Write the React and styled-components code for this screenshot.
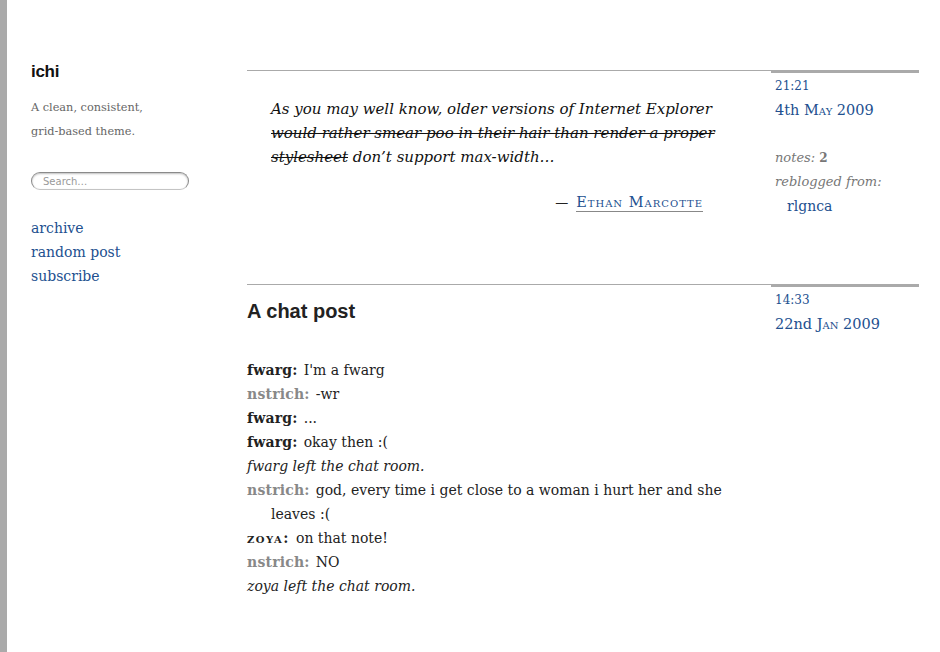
import React from "react";
import styled, { createGlobalStyle } from "styled-components";

const GlobalStyle = createGlobalStyle`
  html, body { margin: 0; padding: 0; background: #fff; }
  body { font-family: "DejaVu Serif", Georgia, serif; color: #222; }
`;

const serif = `"DejaVu Serif", Georgia, serif`;
const sans = `"Liberation Sans", Helvetica, Arial, sans-serif`;
const blue = "#22508f";

const Page = styled.div`
  min-height: 100vh;
  box-sizing: border-box;
  border-left: 7px solid #aaa;
  padding: 60px 0 40px 24px;
  display: flex;
  align-items: flex-start;
`;

const Sidebar = styled.aside`
  width: 158px;
  margin-right: 58px;
  flex-shrink: 0;
`;

const SiteTitle = styled.h1`
  margin: 0;
  font-family: ${sans};
  font-weight: bold;
  font-size: 17px;
  line-height: 24px;
  color: #111;
  letter-spacing: -0.3px;
`;

const Tagline = styled.p`
  margin: 12px 0 0;
  font-family: ${serif};
  font-size: 11.3px;
  line-height: 24px;
  color: #666;
`;

const Search = styled.input`
  display: block;
  box-sizing: border-box;
  margin-top: 28px;
  width: 158px;
  height: 18px;
  border: 1px solid #8a8a8a;
  border-bottom-color: #c4c4c4;
  border-radius: 9px;
  box-shadow: inset 0 1px 2px rgba(0, 0, 0, 0.25);
  padding: 0 11px;
  font-family: "DejaVu Sans", "Liberation Sans", sans-serif;
  font-size: 10px;
  color: #333;
  outline: none;
  &::placeholder { color: #999; }
`;

const NavList = styled.nav`
  margin-top: 26px;
  display: flex;
  flex-direction: column;
`;

const NavLink = styled.a`
  font-family: ${serif};
  font-size: 14px;
  line-height: 24px;
  color: ${blue};
  text-decoration: none;
`;

const Main = styled.main`
  margin-top: 10px;
  display: flex;
  flex-direction: column;
  gap: 66px;
`;

const Post = styled.article`
  display: grid;
  grid-template-columns: 524px 148px;
  align-items: start;
`;

const Content = styled.div`
  border-top: 1px solid #aaa;
  padding-top: ${(p) => p.$top}px;
`;

const Meta = styled.div`
  border-top: 3px solid #aaa;
  padding: 1px 0 0 4px;
  font-family: ${serif};
  line-height: 24px;
`;

const Time = styled.a`
  display: block;
  font-size: 12px;
  color: ${blue};
  text-decoration: none;
`;

const DateLink = styled.a`
  display: block;
  font-size: 14.5px;
  color: ${blue};
  text-decoration: none;
`;

const Month = styled.span`
  font-variant: small-caps;
`;

const Notes = styled.div`
  margin-top: 24px;
  font-size: 13px;
  font-style: italic;
  color: #777;
`;

const NoteCount = styled.b`
  font-style: normal;
  font-size: 12px;
`;

const Reblog = styled.div`
  font-size: 13px;
  font-style: italic;
  color: #777;
`;

const ReblogLink = styled.a`
  display: block;
  padding-left: 12px;
  font-size: 14px;
  color: ${blue};
  text-decoration: none;
`;

const Quote = styled.blockquote`
  margin: 0;
  padding: 0 24px;
  font-family: ${serif};
  font-style: italic;
  font-size: 15px;
  line-height: 24px;
  color: #111;
`;

const Struck = styled.del`
  text-decoration: line-through;
`;

const Source = styled.p`
  margin: 21px 68px 0 0;
  text-align: right;
  font-family: ${serif};
  font-size: 13px;
  line-height: 24px;
  color: #222;
`;

const SourceLink = styled.a`
  margin-left: 8px;
  font-size: 14.5px;
  font-variant: small-caps;
  letter-spacing: 1px;
  color: ${blue};
  text-decoration: none;
  border-bottom: 1px solid #888;
  padding-bottom: 1px;
`;

const PostTitle = styled.h2`
  margin: 0;
  font-family: ${sans};
  font-weight: bold;
  font-size: 20px;
  line-height: 24px;
  color: #222;
`;

const Chat = styled.ul`
  list-style: none;
  margin: 35px 0 0;
  padding: 0;
  font-family: ${serif};
  font-size: 14px;
  line-height: 24px;
  color: #222;
  width: 500px;
`;

const Line = styled.li`
  padding-left: 24px;
  text-indent: -24px;
  font-style: ${(p) => (p.$action ? "italic" : "normal")};
`;

const Speaker = styled.b`
  color: ${(p) => (p.$alt ? "#888" : "#222")};
  font-variant: ${(p) => (p.$caps ? "small-caps" : "normal")};
  letter-spacing: ${(p) => (p.$caps ? "1.5px" : "0.2px")};
  margin-right: 6px;
`;

const chat = [
  { who: "fwarg", text: "I'm a fwarg" },
  { who: "nstrich", alt: true, text: "-wr" },
  { who: "fwarg", text: "..." },
  { who: "fwarg", text: "okay then :(" },
  { action: "fwarg left the chat room." },
  { who: "nstrich", alt: true, text: "god, every time i get close to a woman i hurt her and she leaves :(" },
  { who: "zoya", caps: true, text: "on that note!" },
  { who: "nstrich", alt: true, text: "NO" },
  { action: "zoya left the chat room." },
];

export default function App() {
  return (
    <>
      <GlobalStyle />
      <Page>
        <Sidebar>
          <SiteTitle>ichi</SiteTitle>
          <Tagline>
            A clean, consistent,
            <br />
            grid-based theme.
          </Tagline>
          <Search type="text" placeholder="Search…" />
          <NavList>
            <NavLink href="#">archive</NavLink>
            <NavLink href="#">random post</NavLink>
            <NavLink href="#">subscribe</NavLink>
          </NavList>
        </Sidebar>
        <Main>
          <Post>
            <Content $top={26}>
              <Quote>
                As you may well know, older versions of Internet Explorer{" "}
                <Struck>would rather smear poo in their hair than render a proper stylesheet</Struck>{" "}
                don’t support max-width…
              </Quote>
              <Source>
                —<SourceLink href="#">Ethan Marcotte</SourceLink>
              </Source>
            </Content>
            <Meta>
              <Time href="#">21:21</Time>
              <DateLink href="#">
                4th <Month>May</Month> 2009
              </DateLink>
              <Notes>
                notes: <NoteCount>2</NoteCount>
              </Notes>
              <Reblog>reblogged from:</Reblog>
              <ReblogLink href="#">rlgnca</ReblogLink>
            </Meta>
          </Post>
          <Post>
            <Content $top={14}>
              <PostTitle>A chat post</PostTitle>
              <Chat>
                {chat.map((c, i) =>
                  c.action ? (
                    <Line key={i} $action>
                      {c.action}
                    </Line>
                  ) : (
                    <Line key={i}>
                      <Speaker $alt={c.alt} $caps={c.caps}>
                        {c.who}:
                      </Speaker>
                      {c.text}
                    </Line>
                  )
                )}
              </Chat>
            </Content>
            <Meta>
              <Time href="#">14:33</Time>
              <DateLink href="#">
                22nd <Month>Jan</Month> 2009
              </DateLink>
            </Meta>
          </Post>
        </Main>
      </Page>
    </>
  );
}
